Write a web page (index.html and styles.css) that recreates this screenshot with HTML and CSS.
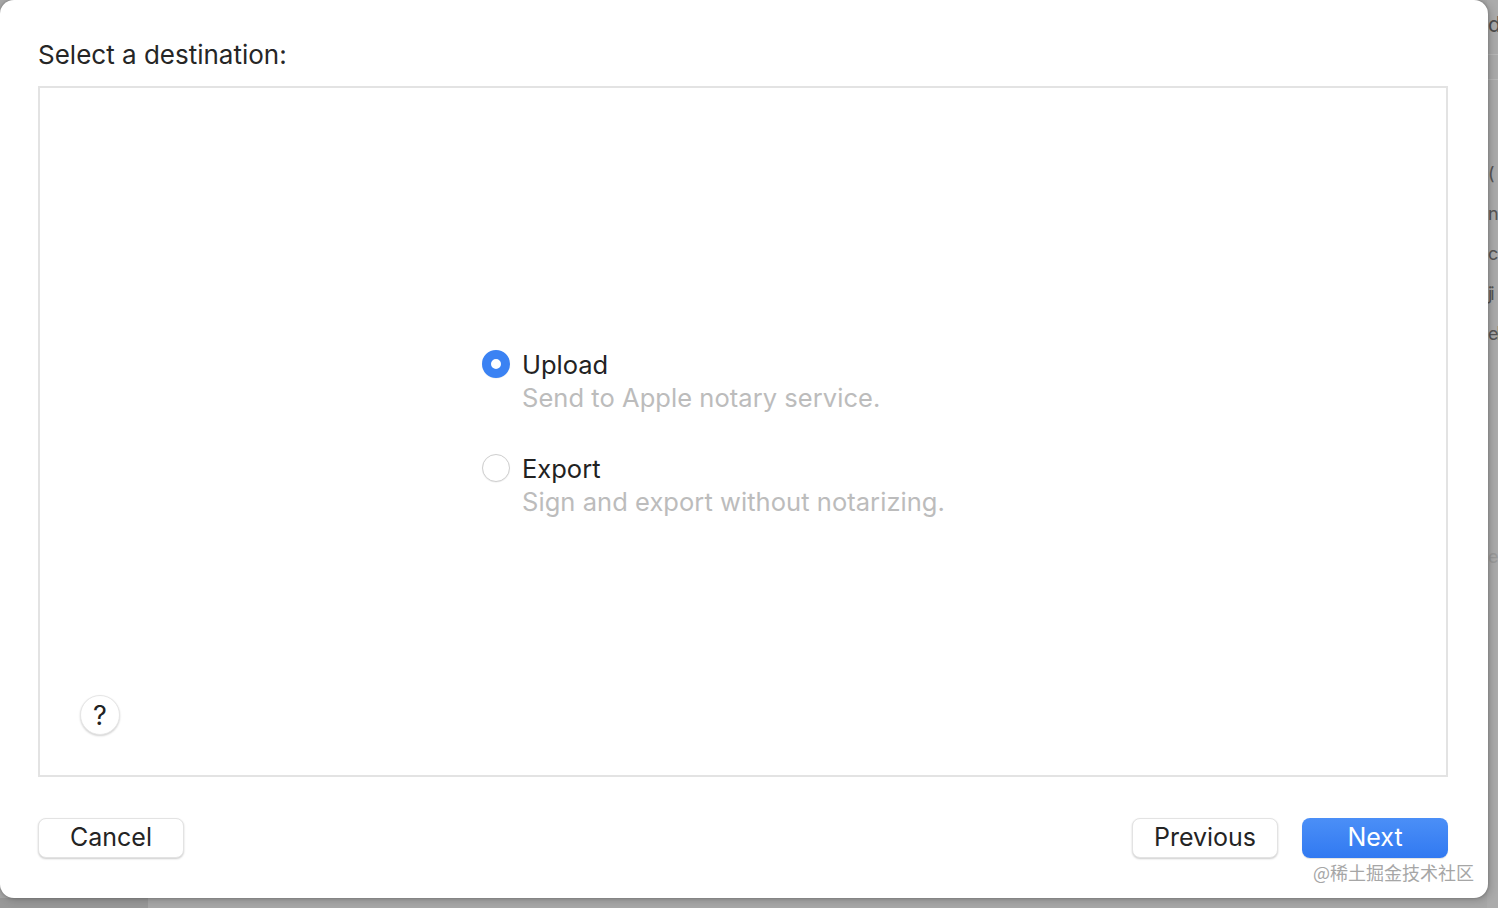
FILE: index.html
```html
<!DOCTYPE html>
<html lang="en">
<head>
    <meta charset="UTF-8">
    <meta name="viewport" content="width=device-width, initial-scale=1.0">
    <title>Select a destination</title>
    <link rel="stylesheet" href="styles.css">
</head>
<body>
    <div class="stage">
        <div class="backdrop">
            <div class="backdrop-main">
                <div class="backdrop-foot"></div>
            </div>
            <div class="backdrop-side">
                <div class="side-line side-title">d</div>
                <div class="side-rule"></div>
                <div class="side-rule second"></div>
                <div class="side-line first">(</div>
                <div class="side-line">n</div>
                <div class="side-line">c</div>
                <div class="side-line">ji</div>
                <div class="side-line">el</div>
                <div class="side-line faded">e</div>
            </div>
        </div>

        <div class="sheet">
            <h1 class="sheet-title">Select a destination:</h1>

            <div class="panel">
                <div class="options">
                    <label class="option">
                        <span class="radio checked"></span>
                        <span class="option-text">
                            <span class="option-name">Upload</span>
                            <span class="option-desc">Send to Apple notary service.</span>
                        </span>
                    </label>
                    <label class="option">
                        <span class="radio"></span>
                        <span class="option-text">
                            <span class="option-name">Export</span>
                            <span class="option-desc">Sign and export without notarizing.</span>
                        </span>
                    </label>
                </div>
                <button class="help-button">?</button>
            </div>

            <div class="footer">
                <button class="btn">Cancel</button>
                <div class="footer-right">
                    <button class="btn">Previous</button>
                    <button class="btn btn-primary">Next</button>
                </div>
            </div>
            <div class="watermark">@稀土掘金技术社区</div>
        </div>
    </div>
</body>
</html>
```

FILE: styles.css
```css
html, body {
    margin: 0;
    padding: 0;
}
body {
    width: 1498px;
    height: 908px;
    overflow: hidden;
    background-color: #a7a7a7;
    font-family: Inter, "Noto Sans", "Noto Sans CJK SC", sans-serif;
    color: #262626;
}
.stage {
    display: grid;
    width: 1498px;
    height: 908px;
}
.backdrop,
.sheet {
    grid-area: 1 / 1;
}
.backdrop {
    display: flex;
}
.backdrop-main {
    width: 1487px;
    display: flex;
    flex-direction: column;
    justify-content: flex-end;
}
.backdrop-foot {
    height: 10px;
    width: 148px;
    background-color: #989898;
}
.backdrop-side {
    flex: 1;
    display: flex;
    flex-direction: column;
    align-items: flex-start;
    overflow: hidden;
    background-color: #ababab;
    color: #555;
}
.side-line {
    font-size: 18px;
    line-height: 40px;
    white-space: nowrap;
    letter-spacing: -2px;
    padding-left: 1px;
}
.side-title {
    font-size: 21px;
    line-height: 50px;
    color: #4e4e4e;
}
.side-rule {
    align-self: stretch;
    height: 1px;
    margin-top: 4px;
    background-color: #b8b8b8;
}
.side-rule.second {
    margin-top: 24px;
}
.side-line.first {
    margin-top: 74px;
}
.side-line.faded {
    margin-top: 183px;
    color: #9a9a9a;
}

.sheet {
    width: 1488px;
    height: 898px;
    box-sizing: border-box;
    background-color: #fff;
    border-radius: 14px;
    box-shadow: 0 0 3px rgba(0, 0, 0, 0.25), 2px 2px 8px rgba(0, 0, 0, 0.2);
    padding: 40px 40px 0 38px;
    display: flex;
    flex-direction: column;
}
.sheet-title {
    margin: 0 0 16px 0;
    font-size: 26px;
    line-height: 30px;
    font-weight: 400;
}
.panel {
    height: 691px;
    box-sizing: border-box;
    border: 2px solid #e3e3e3;
    display: grid;
}
.options,
.help-button {
    grid-area: 1 / 1;
}
.options {
    align-self: center;
    margin-left: 442px;
    margin-top: 3px;
    display: flex;
    flex-direction: column;
    gap: 38px;
}
.option {
    display: flex;
    align-items: flex-start;
    gap: 12px;
}
.radio {
    width: 28px;
    height: 28px;
    box-sizing: border-box;
    border-radius: 50%;
    border: 1px solid #cfcfcf;
    background-color: #fff;
    box-shadow: 0 0.5px 1px rgba(0, 0, 0, 0.08);
    margin-top: 2px;
    flex-shrink: 0;
}
.radio.checked {
    border: 9px solid #3b82f3;
    background-color: #fff;
}
.option-text {
    display: flex;
    flex-direction: column;
}
.option-name {
    font-size: 25.5px;
    line-height: 33px;
    color: #222;
}
.option-desc {
    font-size: 25.5px;
    line-height: 33px;
    letter-spacing: 0.05px;
    color: #bcbcbc;
}
.help-button {
    align-self: end;
    justify-self: start;
    margin: 0 0 40px 40px;
    width: 40px;
    height: 40px;
    border-radius: 50%;
    border: 1px solid #e6e6e6;
    background-color: #fff;
    box-shadow: 0 1px 2px rgba(0, 0, 0, 0.18);
    font-family: Inter, sans-serif;
    font-size: 27px;
    line-height: 1;
    color: #222;
    padding: 0;
    cursor: pointer;
}
.footer {
    display: flex;
    justify-content: space-between;
    margin-top: 41px;
}
.footer-right {
    display: flex;
    gap: 24px;
}
.btn {
    width: 146px;
    height: 40px;
    box-sizing: border-box;
    border-radius: 8px;
    border: 1px solid #e3e3e3;
    background-color: #fff;
    box-shadow: 0 1px 2px rgba(0, 0, 0, 0.2);
    font-family: Inter, sans-serif;
    font-size: 25px;
    line-height: 1;
    color: #242424;
    padding: 0 0 1px 0;
    cursor: pointer;
}
.btn-primary {
    border: none;
    background: linear-gradient(#4b8ff7, #3179f1);
    color: #fff;
    box-shadow: 0 1px 1px rgba(0, 0, 0, 0.12);
}
.watermark {
    align-self: flex-end;
    margin: 3px -26px 0 0;
    font-family: "Noto Sans CJK SC", sans-serif;
    font-size: 18px;
    line-height: 22px;
    color: #a6a6a6;
}
```
